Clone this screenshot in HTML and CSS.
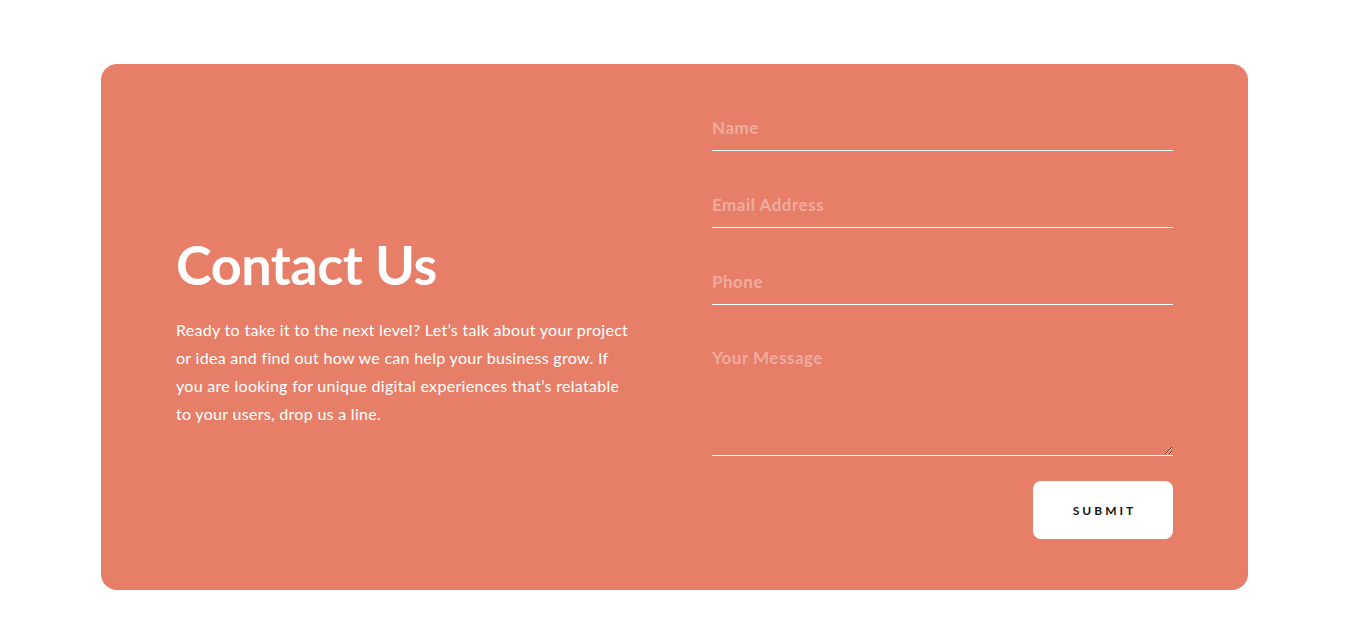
FILE: index.html
```html
<!DOCTYPE html>
<html lang="en">
<head>
<meta charset="utf-8">
<title>Contact Us</title>
<link rel="stylesheet" href="styles.css">
</head>
<body>
<section class="page">
  <div class="card">
    <div class="intro">
      <h1 class="title">Contact Us</h1>
      <p class="lead">Ready to take it to the next level? Let’s talk about your project or idea and find out how we can help your business grow. If you are looking for unique digital experiences that’s relatable to your users, drop us a line.</p>
    </div>
    <form class="form">
      <input class="field" type="text" placeholder="Name">
      <input class="field" type="email" placeholder="Email Address">
      <input class="field" type="tel" placeholder="Phone">
      <textarea class="field message" placeholder="Your Message"></textarea>
      <div class="actions">
        <button class="submit" type="button">SUBMIT</button>
      </div>
    </form>
  </div>
</section>
</body>
</html>
```
FILE: styles.css
```css
* { box-sizing: border-box; }
html, body { margin: 0; padding: 0; background: #ffffff; }
body { font-family: "Lato", "Open Sans", sans-serif; }
.page { padding: 64px 97px 33px 101px; }
.card {
  background: #e77f68;
  border-radius: 16px;
  padding: 41px 75px 51px 75px;
  display: grid;
  grid-template-columns: 461px 461px;
  column-gap: 75px;
  align-items: center;
}
.intro { padding-top: 16px; }
.title {
  margin: 0 0 18px 0;
  color: #ffffff;
  font-size: 54px;
  font-weight: 700;
  line-height: 66px;
  letter-spacing: -0.5px;
}
.lead {
  margin: 0;
  color: #ffffff;
  font-size: 16px;
  line-height: 28px;
  font-weight: 400;
  letter-spacing: 0.3px;
}
.form { display: flex; flex-direction: column; }
.field {
  display: block;
  width: 100%;
  height: 46px;
  margin: 0 0 31px 0;
  padding: 10px 0;
  border: 0;
  border-bottom: 1px solid #ffffff;
  background: transparent;
  color: #ffffff;
  font-family: inherit;
  font-size: 17px;
  font-weight: 700;
  line-height: 24px;
  letter-spacing: 0.5px;
  outline: none;
}
.field::placeholder { color: #f0ab9d; opacity: 1; }
.message { height: 120px; margin-bottom: 25px; resize: vertical; }
.actions { display: flex; justify-content: flex-end; }
.submit {
  width: 140px;
  height: 58px;
  border: 0;
  border-radius: 8px;
  background: #ffffff;
  color: #111111;
  font-family: inherit;
  font-size: 12px;
  font-weight: 700;
  letter-spacing: 3px;
  padding: 0 0 0 3px;
  cursor: pointer;
}
```
